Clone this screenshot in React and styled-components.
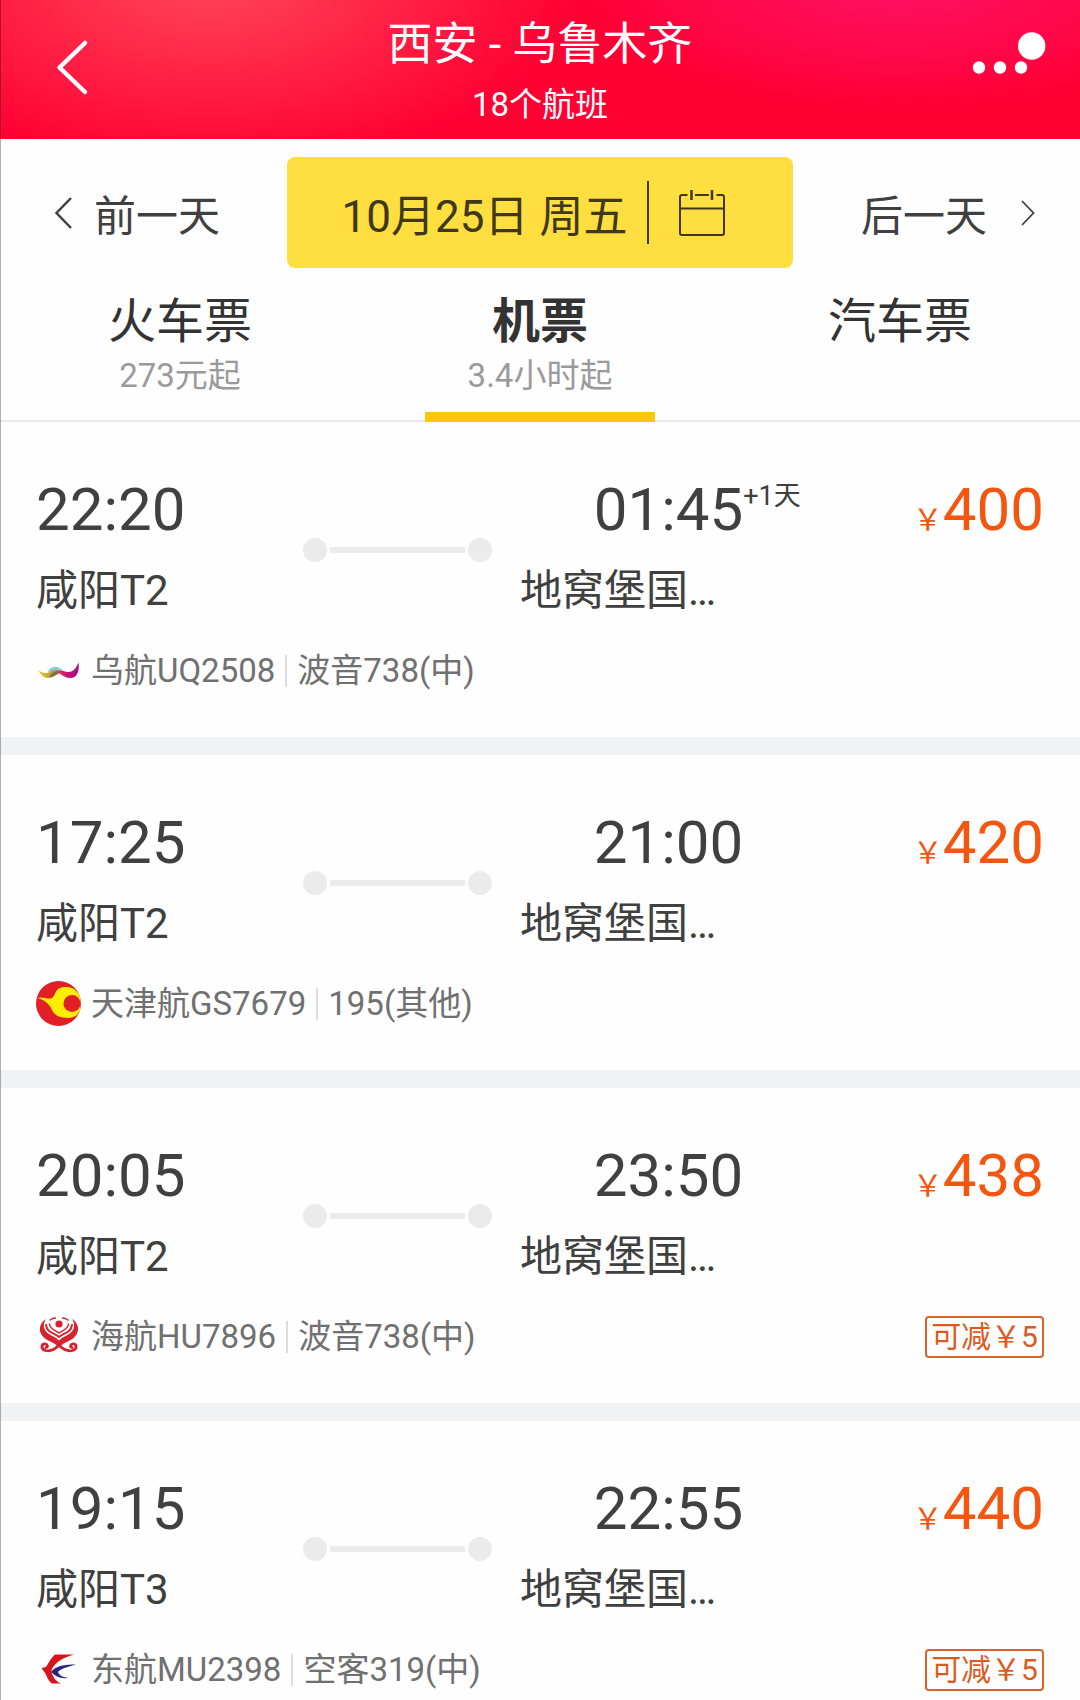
import React, { useState } from 'react'
import styled, { createGlobalStyle } from 'styled-components'

const GlobalStyle = createGlobalStyle`
  body {
    margin: 0;
    background: #fefefe;
    font-family: Roboto, "Noto Sans CJK SC", sans-serif;
    color: #404040;
  }
  button {
    border: 0;
    padding: 0;
    background: none;
    font: inherit;
    color: inherit;
    cursor: pointer;
  }
  svg {
    display: block;
  }
`

const Page = styled.div`
  position: relative;
  min-height: 100vh;

  &::after {
    content: '';
    position: absolute;
    top: 0;
    bottom: 0;
    left: 0;
    width: 1px;
    background: rgba(0, 0, 0, 0.3);
  }
`

const Header = styled.header`
  display: grid;
  grid-template-columns: 1fr auto 1fr;
  align-items: start;
  padding: 15px 34px 8px 50px;
  color: #fff;
  background:
    radial-gradient(ellipse 370px 190px at 210px -20px, #ff4659, rgba(255, 0, 51, 0)),
    radial-gradient(ellipse 330px 130px at 900px -20px, #ff1168, rgba(255, 0, 51, 0)),
    #ff0033;
`

const BackButton = styled.button`
  justify-self: start;
  padding-top: 22px;
`

const MoreButton = styled.button`
  justify-self: end;
  padding-top: 14px;
`

const Heading = styled.div`
  text-align: center;
  margin-left: -16px;
`

const Route = styled.h1`
  margin: 0;
  font-size: 45px;
  font-weight: 400;
  line-height: 60px;
`

const FlightCount = styled.p`
  margin: 4px 0 0;
  font-size: 33px;
  line-height: 52px;
`

const DateBar = styled.div`
  display: grid;
  grid-template-columns: 1fr auto 1fr;
  align-items: center;
  padding: 18px 45px 0 54px;
`

const DayButton = styled.button`
  display: flex;
  align-items: center;
  justify-self: ${props => props.$end ? 'end' : 'start'};
  gap: ${props => props.$end ? 34 : 20}px;
  font-size: 42px;
  line-height: 60px;
`

const DayLabel = styled.span`
  padding-top: 8px;
`

const DateButton = styled.button`
  display: flex;
  align-items: center;
  height: 111px;
  margin-left: -9px;
  padding: 0 68px 0 55px;
  border-radius: 8px;
  background: #ffde40;
  color: #40381c;
  font-size: 44px;
`

const DateDivider = styled.span`
  width: 2px;
  height: 63px;
  margin: 0 30px 0 20px;
  background: #40381c;
`

const Tabs = styled.div`
  display: grid;
  grid-template-columns: repeat(3, 1fr);
  border-bottom: 2px solid #e8e8e8;
`

const Tab = styled.button`
  position: relative;
  display: flex;
  flex-direction: column;
  align-items: center;
  gap: 4px;
  padding: 26px 0 22px;
  color: #333;
  font-size: 48px;
  font-weight: ${props => props.$active ? 700 : 400};
  line-height: 56px;

  &::after {
    content: '';
    display: ${props => props.$active ? 'block' : 'none'};
    position: absolute;
    bottom: -2px;
    width: 230px;
    height: 10px;
    background: #fcc60a;
  }
`

const TabNote = styled.span`
  min-height: 44px;
  color: #9a9a9a;
  font-size: 33px;
  font-weight: 400;
  line-height: 44px;
`

const FlightList = styled.ul`
  margin: 0;
  padding: 0;
  list-style: none;
`

const Flight = styled.li`
  padding: 52px 36px 44px;
  border-bottom: 18px solid #f1f2f4;
`

const Trip = styled.div`
  display: grid;
  grid-template-columns: 1fr 189px 325px 227px;
`

const Stop = styled.div`
  display: flex;
  flex-direction: column;
  gap: 20px;
  padding-left: ${props => props.$arrival ? 28 : 0}px;
`

const Time = styled.time`
  position: relative;
  align-self: ${props => props.$center ? 'center' : 'flex-start'};
  font-size: 60px;
  line-height: 72px;
`

const NextDay = styled.span`
  position: absolute;
  top: 6px;
  left: 100%;
  font-size: 27px;
  line-height: 32px;
  white-space: nowrap;
`

const Station = styled.span`
  font-size: 42px;
  line-height: 50px;
`

const Track = styled.div`
  display: flex;
  align-items: center;
  align-self: start;
  gap: 3px;
  margin-top: 64px;
`

const Dot = styled.span`
  width: 24px;
  height: 24px;
  border-radius: 50%;
  background: #ebebeb;
`

const Line = styled.span`
  flex: 1;
  height: 6px;
  background: #ebebeb;
`

const Price = styled.div`
  text-align: right;
  color: #f4560f;
  font-size: 60px;
  line-height: 72px;
`

const Currency = styled.span`
  font-size: 30px;
`

const Details = styled.div`
  display: flex;
  align-items: center;
  height: 45px;
  margin-top: 32px;
  color: #707070;
  font-size: 33px;
  line-height: 45px;
`

const Plane = styled.span`
  margin-left: 10px;
  padding-left: 10px;
  border-left: 2px solid #dcdcdc;
  line-height: 32px;
`

const Carrier = styled.span`
  margin-left: 10px;
`

const Discount = styled.span`
  margin-left: auto;
  padding: 0 4px;
  border: 2px solid #df6129;
  border-radius: 4px;
  color: #dc5a20;
  font-size: 30px;
  line-height: 38px;
`

function BackIcon () {
  return <svg width="40" height="60" viewBox="0 0 40 60" fill="none" stroke="#fff" strokeWidth="4.500" strokeLinecap="round" strokeLinejoin="round">
    <path d="M35 6 L9.500 30.500 L35 55" />
  </svg>
}

function MoreIcon () {
  return <svg width="74" height="48" viewBox="0 0 74 48" fill="#fff">
    <circle cx="7" cy="38.500" r="6.200" />
    <circle cx="28" cy="38.500" r="6.200" />
    <circle cx="49" cy="38.500" r="6.200" />
    <circle cx="59.700" cy="17" r="13.700" />
  </svg>
}

function PrevIcon () {
  return <svg width="20" height="34" viewBox="0 0 20 34" fill="none" stroke="#404040" strokeWidth="2.500">
    <path d="M17 2 L2.500 17 L17 32" />
  </svg>
}

function NextIcon () {
  return <svg width="14" height="28" viewBox="0 0 14 28" fill="none" stroke="#404040" strokeWidth="1.800">
    <path d="M1 2 L12.500 14 L1 26" />
  </svg>
}

function CalendarIcon () {
  return <svg width="46" height="48" viewBox="0 0 46 48" fill="none" stroke="#40381c" strokeWidth="2">
    <path d="M8.500 6 H3 Q1 6 1 8 V44 Q1 46 3 46 H43 Q45 46 45 44 V8 Q45 6 43 6 H37.500" />
    <path d="M16 6 H30 M1 19.500 H45" />
    <path d="M12.500 1 V11 M33 1 V11" strokeWidth="2.500" />
  </svg>
}

function UrumqiLogo () {
  return <svg width="45" height="45" viewBox="0 0 45 45">
    <defs>
      <linearGradient id="uqGold" x1="0" x2="1">
        <stop offset="0" stopColor="#e6cf3a" />
        <stop offset="1" stopColor="#a8862c" />
      </linearGradient>
      <linearGradient id="uqPink" x1="0" x2="1">
        <stop offset="0" stopColor="#e8464f" />
        <stop offset="0.500" stopColor="#c4107c" />
        <stop offset="1" stopColor="#a80a86" />
      </linearGradient>
    </defs>
    <path d="M12 23 C16 17 23 18 27 22 C22 21 18 23 14 27 Z" fill="#86ccd6" />
    <path d="M2 22.500 C7 25 10 26 14 24 C17 21.500 20 21 23 22.500 C19 24 18 30 12 30 C7 30 5 26 2 22.500 Z" fill="url(#uqGold)" />
    <path d="M13 28.500 C17 24 20 23 25 24.500 L20 27 C17 29 15 30 13 28.500 Z" fill="#7d6f45" />
    <path d="M19 24 C25 20 28 24 32 24 C38 24 40 20 42.500 14.500 C43.500 22 42 30 34 30 C28 30 25 25 19 24 Z" fill="url(#uqPink)" />
  </svg>
}

function TianjinLogo () {
  return <svg width="45" height="45" viewBox="0 0 45 45">
    <circle cx="22.500" cy="22.500" r="22.500" fill="#e21f26" />
    <path d="M1.500 17 C7 15 12 19 16 17 C20 15 18 7 28 6 C38 5 43 11 44.500 18 L44 29 C42 34 38 37 32 37 C24 37 18 34 16 29 C13 22 8 19 1.500 17 Z" fill="#ffed00" />
    <circle cx="36" cy="22.500" r="8.500" fill="#e21f26" />
  </svg>
}

function HainanLogo () {
  return <svg width="45" height="45" viewBox="0 0 45 45">
    <circle cx="23" cy="10" r="3.600" fill="#d6232f" />
    <path d="M10 5 C2 10 2 19 9 24.500 C14 28 20 29 23 34 C26 29 32 28 37 24.500 C44 19 44 10 36 5 C40 11 38 17 33 20 C29 22.500 26 23.500 23 26.500 C20 23.500 17 22.500 13 20 C8 17 6 11 10 5 Z" fill="#d6232f" />
    <g fill="none" stroke="#d6232f" strokeLinecap="round">
      <path d="M10 11 C11 18.500 18 19 23 23 C28 19 35 18.500 36 11" strokeWidth="2" />
      <path d="M13.500 10 C14 15.500 19 16 23 19 C27 16 32 15.500 32.500 10" strokeWidth="1.400" />
      <path d="M14 6 C16 4.500 18 4 19.500 4 M26.500 4 C28 4 30 4.500 32 6" strokeWidth="1.400" />
      <path d="M22 32 C18 36 14 37.500 9.500 36.500 C4 34.500 5.500 29.500 9.500 30 C12 30.500 12 33 10 33.500" strokeWidth="2.800" />
      <path d="M24 32 C28 36 32 37.500 36.500 36.500 C42 34.500 40.500 29.500 36.500 30 C34 30.500 34 33 36 33.500" strokeWidth="2.800" />
    </g>
  </svg>
}

function EasternLogo () {
  return <svg width="45" height="45" viewBox="0 0 45 45">
    <path d="M5.500 21 L10 20 C13 15 15 11 19 7.500 H38 C27 11 19 15 15.500 23 C16 29 19 34 25 36.500 H16 C12 34 11 29 9 26 Z" fill="#d8141c" />
    <path d="M15.500 24.500 C20 18.500 29 17.500 40 17.500 C31 20 24 22 22 25 C23 28 26 30 32 31 C24 32 18 29 15.500 24.500 Z" fill="#22267c" />
  </svg>
}

const tabs = [
  { name: '火车票', note: '273元起' },
  { name: '机票', note: '3.4小时起' },
  { name: '汽车票', note: '' }
]

const flights = [
  { depart: '22:20', from: '咸阳T2', arrive: '01:45', nextDay: '+1天', price: 400, Logo: UrumqiLogo, carrier: '乌航UQ2508', plane: '波音738(中)' },
  { depart: '17:25', from: '咸阳T2', arrive: '21:00', price: 420, Logo: TianjinLogo, carrier: '天津航GS7679', plane: '195(其他)' },
  { depart: '20:05', from: '咸阳T2', arrive: '23:50', price: 438, Logo: HainanLogo, carrier: '海航HU7896', plane: '波音738(中)', discount: '可减￥5' },
  { depart: '19:15', from: '咸阳T3', arrive: '22:55', price: 440, Logo: EasternLogo, carrier: '东航MU2398', plane: '空客319(中)', discount: '可减￥5' }
]

function FlightCard ({ flight }) {
  const { Logo } = flight
  return <Flight>
    <Trip>
      <Stop>
        <Time>{flight.depart}</Time>
        <Station>{flight.from}</Station>
      </Stop>
      <Track>
        <Dot />
        <Line />
        <Dot />
      </Track>
      <Stop $arrival>
        <Time $center>
          {flight.arrive}
          {flight.nextDay && <NextDay>{flight.nextDay}</NextDay>}
        </Time>
        <Station>地窝堡国…</Station>
      </Stop>
      <Price><Currency>￥</Currency>{flight.price}</Price>
    </Trip>
    <Details>
      <Logo />
      <Carrier>{flight.carrier}</Carrier>
      <Plane>{flight.plane}</Plane>
      {flight.discount && <Discount>{flight.discount}</Discount>}
    </Details>
  </Flight>
}

// Flight results for one route and day
export default function App () {
  const [active, setActive] = useState(1)

  return <Page>
    <GlobalStyle />
    <Header>
      <BackButton aria-label="返回"><BackIcon /></BackButton>
      <Heading>
        <Route>西安 - 乌鲁木齐</Route>
        <FlightCount>18个航班</FlightCount>
      </Heading>
      <MoreButton aria-label="更多"><MoreIcon /></MoreButton>
    </Header>
    <DateBar>
      <DayButton><PrevIcon /><DayLabel>前一天</DayLabel></DayButton>
      <DateButton>
        10月25日 周五
        <DateDivider />
        <CalendarIcon />
      </DateButton>
      <DayButton $end><DayLabel>后一天</DayLabel><NextIcon /></DayButton>
    </DateBar>
    <Tabs role="tablist">
      {tabs.map((tab, i) => (
        <Tab key={tab.name} role="tab" aria-selected={i === active} $active={i === active} onClick={() => setActive(i)}>
          {tab.name}
          <TabNote>{tab.note}</TabNote>
        </Tab>
      ))}
    </Tabs>
    <FlightList>
      {flights.map(flight => <FlightCard key={flight.carrier} flight={flight} />)}
    </FlightList>
  </Page>
}
